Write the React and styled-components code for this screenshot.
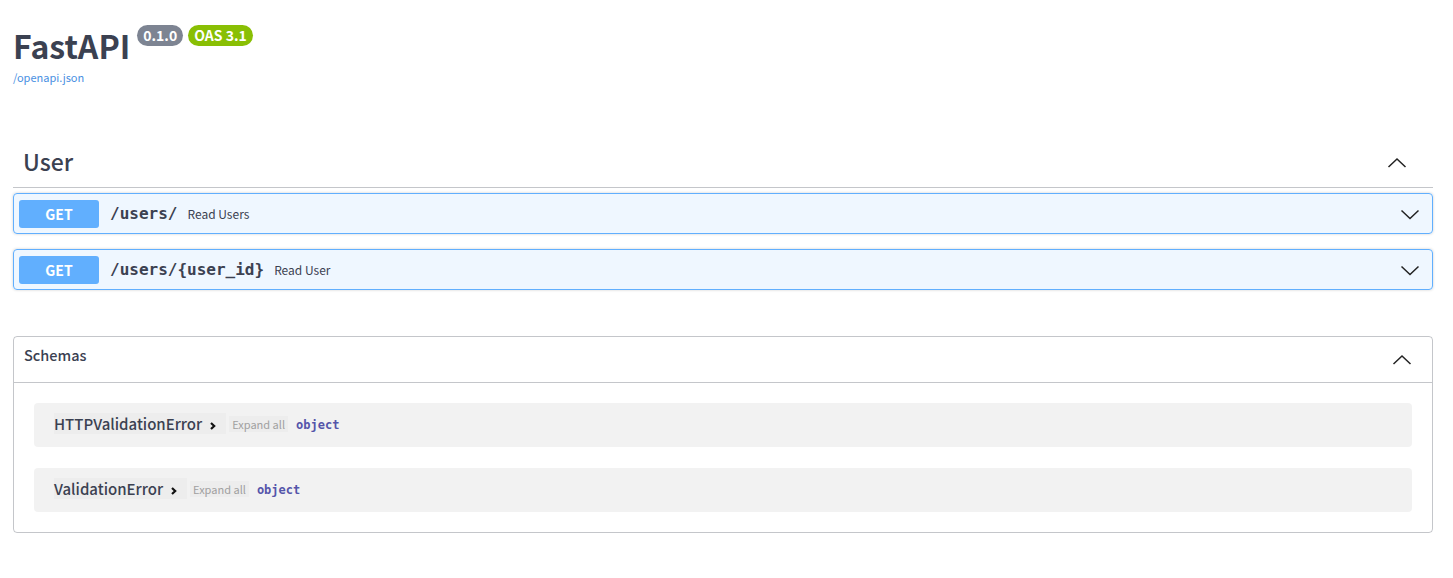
import React from 'react';
import styled, {createGlobalStyle} from 'styled-components';

const GlobalStyle = createGlobalStyle`
  body {
    margin: 0;
    background: #fff;
    font-family: "Noto Sans CJK KR", "Noto Sans", sans-serif;
    color: #3b4151;
  }
`;

const Page = styled.div`
  padding: 0 20px 0 13px;
`;

const Info = styled.div`
  padding: 22px 0 0 0;
`;

const TitleRow = styled.div`
  display: flex;
  align-items: flex-start;
`;

const Title = styled.h2`
  margin: 0;
  font-size: 32px;
  font-weight: 600;
  line-height: 46px;
  color: #3b4151;
`;

const Badge = styled.span`
  display: inline-block;
  margin: 3px 0 0 ${p => p.$gap}px;
  padding: 0 6px;
  height: 21px;
  line-height: 21px;
  border-radius: 57px;
  background: ${p => p.$bg};
  color: #fff;
  font-size: 14px;
  font-weight: 700;
`;

const SpecLink = styled.a`
  display: block;
  margin-top: 1px;
  font-size: 11px;
  color: #4990e2;
  text-decoration: none;
`;

const Tag = styled.div`
  margin-top: 54px;
`;

const TagHeader = styled.div`
  display: flex;
  align-items: center;
  justify-content: space-between;
  height: 48px;
  padding: 0 26px 0 10px;
  border-bottom: 1px solid rgba(59, 65, 81, 0.3);
  margin-bottom: 5px;
`;

const TagTitle = styled.h3`
  margin: 0 0 4px;
  font-size: 23px;
  font-weight: 500;
  color: #3b4151;
`;

const OpBlock = styled.div`
  display: flex;
  align-items: center;
  height: 39px;
  margin-bottom: 15px;
  padding: 0 12px 0 5px;
  border: 1px solid #61affe;
  border-radius: 4px;
  background: rgba(97, 175, 254, 0.1);
  box-shadow: 0 0 3px rgba(0, 0, 0, 0.19);
`;

const Method = styled.span`
  width: 80px;
  height: 28px;
  line-height: 28px;
  text-align: center;
  border-radius: 3px;
  background: #61affe;
  color: #fff;
  font-size: 14px;
  font-weight: 700;
`;

const Path = styled.span`
  margin-left: 11px;
  font-family: "DejaVu Sans Mono", monospace;
  font-size: 16px;
  font-weight: 700;
  color: #3b4151;
`;

const Summary = styled.span`
  flex: 1;
  margin-left: 10px;
  font-size: 12px;
  color: #3b4151;
`;

const Schemas = styled.section`
  margin-top: 46px;
  border: 1px solid rgba(59, 65, 81, 0.3);
  border-radius: 4px;
`;

const SchemasHeader = styled.div`
  display: flex;
  align-items: center;
  justify-content: space-between;
  height: 45px;
  padding: 0 20px 0 10px;
  border-bottom: 1px solid rgba(59, 65, 81, 0.3);
`;

const SchemasTitle = styled.h4`
  margin: 0 0 10px;
  font-size: 14.5px;
  font-weight: 500;
  color: #3b4151;
`;

const SchemaList = styled.div`
  padding: 20px 20px 20px;
  display: flex;
  flex-direction: column;
  gap: 21px;
`;

const ModelRow = styled.div`
  box-sizing: border-box;
  display: flex;
  align-items: center;
  height: 44px;
  padding: 0 20px 3px;
  border-radius: 4px;
  background: rgba(0, 0, 0, 0.05);
`;

const ModelName = styled.span`
  display: flex;
  align-items: center;
  font-size: 15px;
  font-weight: 500;
  color: #3b4151;
  background: rgba(0, 0, 0, 0.02);
  padding-right: 6px;
`;

const ExpandAll = styled.span`
  margin-left: 3px;
  padding: 0 3px;
  font-size: 11px;
  color: #a0a0a0;
  background: rgba(0, 0, 0, 0.02);
`;

const TypeName = styled.span`
  margin-left: 8px;
  font-family: "DejaVu Sans Mono", monospace;
  font-size: 12px;
  font-weight: 700;
  color: #55a;
  margin-top: 3px;
`;

const Chevron = ({dir}) => (
  <svg width="20" height="20" viewBox="0 0 20 20">
    <path
      d={dir === 'up' ? 'M1.5 14L10 6l8.5 8' : 'M1.5 6.5L10 14.5l8.5-8'}
      stroke="#222"
      strokeWidth="1.5"
      fill="none"
    />
  </svg>
);

const SmallArrow = () => (
  <svg width="14" height="14" viewBox="0 0 14 14" style={{marginLeft: 4, marginTop: 4}}>
    <path d="M5 4l3.2 3-3.2 3" stroke="#111" strokeWidth="2.2" fill="none"/>
  </svg>
);

const ops = [
  {path: '/users/', summary: 'Read Users'},
  {path: '/users/{user_id}', summary: 'Read User'},
];

const models = ['HTTPValidationError', 'ValidationError'];

export default function App() {
  return (
    <Page>
      <GlobalStyle />
      <Info>
        <TitleRow>
          <Title>FastAPI</Title>
          <Badge $bg="#7d8492" $gap={7}>0.1.0</Badge>
          <Badge $bg="#89bf04" $gap={5}>OAS 3.1</Badge>
        </TitleRow>
        <SpecLink href="#">/openapi.json</SpecLink>
      </Info>

      <Tag>
        <TagHeader>
          <TagTitle>User</TagTitle>
          <Chevron dir="up" />
        </TagHeader>
        {ops.map(op => (
          <OpBlock key={op.path}>
            <Method>GET</Method>
            <Path>{op.path}</Path>
            <Summary>{op.summary}</Summary>
            <Chevron dir="down" />
          </OpBlock>
        ))}
      </Tag>

      <Schemas>
        <SchemasHeader>
          <SchemasTitle>Schemas</SchemasTitle>
          <Chevron dir="up" />
        </SchemasHeader>
        <SchemaList>
          {models.map(m => (
            <ModelRow key={m}>
              <ModelName>{m}<SmallArrow /></ModelName>
              <ExpandAll>Expand all</ExpandAll>
              <TypeName>object</TypeName>
            </ModelRow>
          ))}
        </SchemaList>
      </Schemas>
    </Page>
  );
}
